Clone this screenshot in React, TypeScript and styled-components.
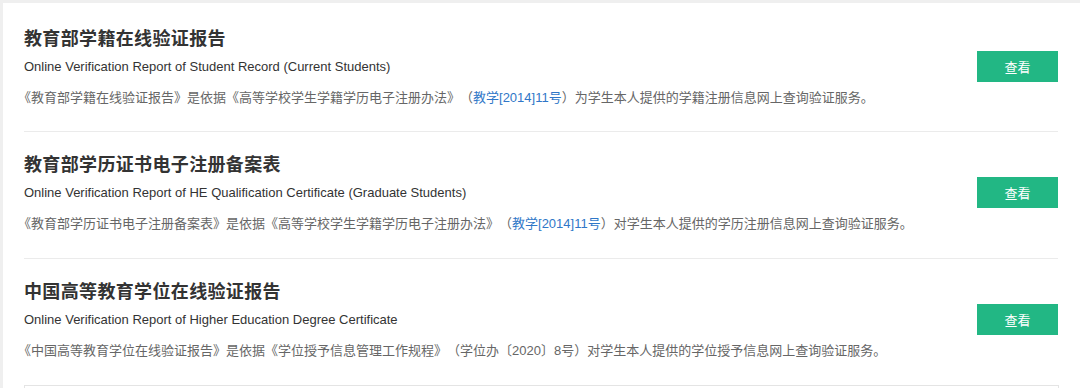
import styled, { createGlobalStyle } from "styled-components";

const GlobalStyle = createGlobalStyle`
  html, body {
    margin: 0;
    padding: 0;
    background: #efefef;
  }
  body {
    font-family: "Liberation Sans", Arial, "Noto Sans CJK SC", sans-serif;
  }
`;

const Page = styled.div`
  padding: 3px 0 0 3px;
  height: 388px;
  box-sizing: border-box;
  overflow: hidden;
`;

const Panel = styled.div`
  background: #fff;
  height: 100%;
  padding: 0 22px 0 21px;
`;

const Item = styled.div<{ $first?: boolean }>`
  display: flex;
  align-items: center;
  padding: ${(p) => (p.$first ? "22px 0 23px" : "19px 0 24px")};
  border-bottom: 1px solid #ebebeb;
`;

const Info = styled.div`
  flex: 1;
  display: flex;
  flex-direction: column;
`;

const Title = styled.h2`
  margin: 0;
  font-size: 18px;
  line-height: 24px;
  letter-spacing: 0.35px;
  font-weight: bold;
  color: #333;
  font-family: "Noto Sans CJK SC", sans-serif;
`;

const Subtitle = styled.div`
  margin-top: 8px;
  font-size: 13px;
  line-height: 20px;
  color: #333;
`;

const Desc = styled.p`
  margin: 11px 0 0 -6px;
  font-size: 13px;
  line-height: 20px;
  color: #666;
  font-family: "Liberation Sans", "Noto Sans CJK SC", sans-serif;
  white-space: nowrap;
  text-spacing-trim: space-all;
`;

const Link = styled.a`
  color: #2f77c8;
  text-decoration: none;
`;

const ViewButton = styled.button`
  width: 81px;
  height: 31px;
  border: 0;
  background: #22b784;
  color: #fff;
  font-size: 13px;
  font-family: "Noto Sans CJK SC", sans-serif;
  cursor: pointer;
  flex-shrink: 0;
`;

const NextBox = styled.div`
  margin: -1px -1px 0 0;
  height: 20px;
  border: 1px solid #e4e4e4;
  border-bottom: 0;
`;

const reports = [
  {
    title: "教育部学籍在线验证报告",
    en: "Online Verification Report of Student Record (Current Students)",
    before: "《教育部学籍在线验证报告》是依据《高等学校学生学籍学历电子注册办法》（",
    link: "教学[2014]11号",
    after: "）为学生本人提供的学籍注册信息网上查询验证服务。",
  },
  {
    title: "教育部学历证书电子注册备案表",
    en: "Online Verification Report of HE Qualification Certificate (Graduate Students)",
    before: "《教育部学历证书电子注册备案表》是依据《高等学校学生学籍学历电子注册办法》（",
    link: "教学[2014]11号",
    after: "）对学生本人提供的学历注册信息网上查询验证服务。",
  },
  {
    title: "中国高等教育学位在线验证报告",
    en: "Online Verification Report of Higher Education Degree Certificate",
    before: "《中国高等教育学位在线验证报告》是依据《学位授予信息管理工作规程》（学位办〔2020〕8号）对学生本人提供的学位授予信息网上查询验证服务。",
    link: "",
    after: "",
  },
];

export default function App() {
  return (
    <>
      <GlobalStyle />
      <Page>
        <Panel>
          {reports.map((r, i) => (
            <Item key={r.title} $first={i === 0}>
              <Info>
                <Title>{r.title}</Title>
                <Subtitle>{r.en}</Subtitle>
                <Desc>
                  {r.before}
                  {r.link && <Link href="#">{r.link}</Link>}
                  {r.after}
                </Desc>
              </Info>
              <ViewButton>查看</ViewButton>
            </Item>
          ))}
          <NextBox />
        </Panel>
      </Page>
    </>
  );
}
